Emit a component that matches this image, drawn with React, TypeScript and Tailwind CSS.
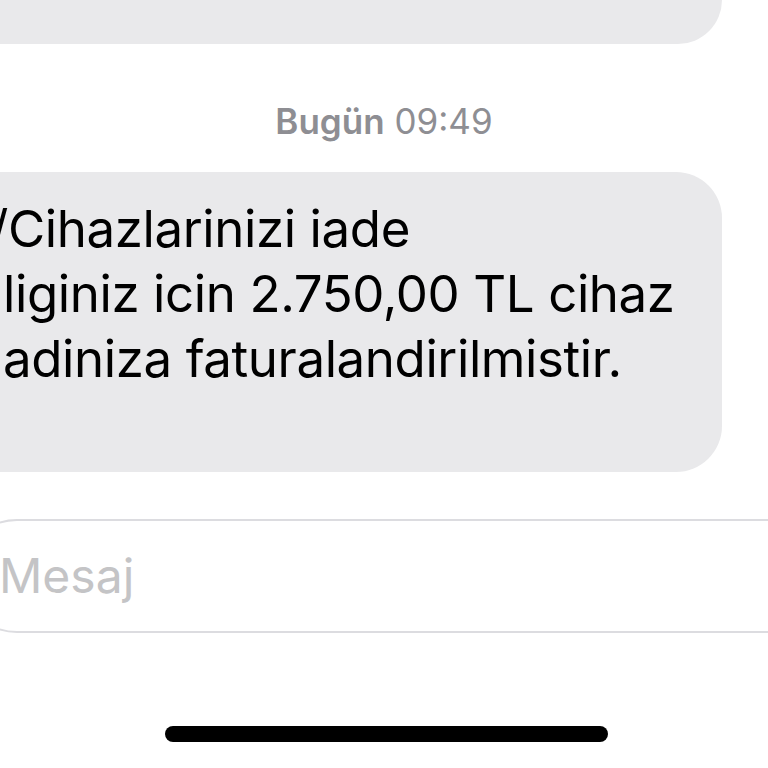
export default function App() {
  const font = { fontFamily: "Inter, 'Noto Sans', sans-serif" };
  return (
    <div className="relative h-[768px] w-[768px] overflow-hidden bg-white" style={font}>
      {/* previous message, mostly scrolled off */}
      <div className="-ml-[50px] h-[44px] w-[772px] rounded-br-[46px] bg-[#e9e9eb]" />

      <p className="mt-[57px] text-center text-[35px] leading-[40px] text-[#8e8e93]">
        <span className="font-semibold">Bugün</span> 09:49
      </p>

      <div className="-ml-[50px] mt-[31px] h-[300px] w-[772px] rounded-[46px] bg-[#e9e9eb] pl-[53px] pt-[24px]">
        <div className="whitespace-nowrap text-[51px] leading-[65px] tracking-[-0.4px] text-black">
          <div className="-ml-[13px]">/Cihazlarinizi iade</div>
          <div>liginiz icin 2.750,00 TL cihaz</div>
          <div>adiniza faturalandirilmistir.</div>
        </div>
      </div>

      <div className="-ml-[40px] mt-[47px] flex h-[114px] w-[900px] items-center rounded-full border-2 border-[#dcdce0] pl-[37px]">
        <span className="text-[48px] leading-none text-[#c4c4c6]">Mesaj</span>
      </div>

      <div className="ml-[165px] mt-[93px] h-[16px] w-[443px] rounded-full bg-black" />
    </div>
  );
}
